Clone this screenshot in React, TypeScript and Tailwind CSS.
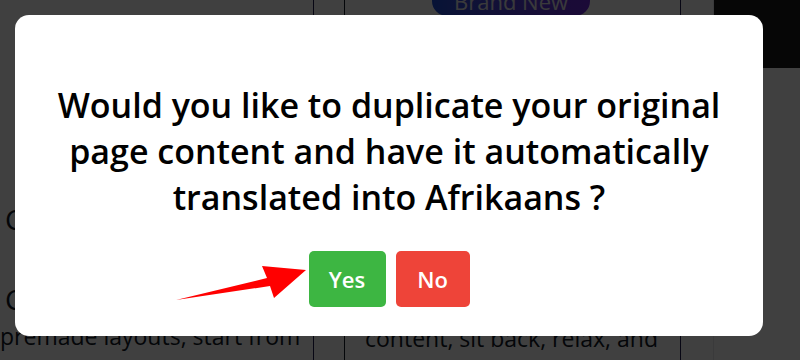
export default function App() {
  return (
    <div className="relative w-[800px] h-[360px] overflow-hidden bg-white font-['Open_Sans',sans-serif]">
      {/* page behind the dialog */}
      <div className="flex h-full">
        <div className="w-[314px] shrink-0 border-r border-[#1e1b4b] pt-[205px] pl-[5px] text-[#111827]">
          <div className="text-[28px] leading-none">C</div>
          <div className="mt-[52px] text-[28px] leading-none">C</div>
          <div className="mt-[12px] -ml-[5px] text-[23px] leading-none whitespace-nowrap">premade layouts, start from</div>
        </div>
        <div className="w-[31px] shrink-0 border-r border-[#111827]" />
        <div className="relative w-[336px] shrink-0 border-r border-[#1e1b4b] pl-[20px] pt-[327px] text-[23px] leading-none whitespace-nowrap text-[#111827]">
          content, sit back, relax, and
          <div className="absolute left-[87px] -top-[14px] w-[158px] h-[30px] rounded-full bg-gradient-to-r from-[#1d4ed8] to-[#6d28d9] flex items-end justify-center pb-[4px] text-[22px] text-[#e5e7eb]">
            Brand New
          </div>
        </div>
        <div className="w-[33px] shrink-0 border-r border-[#e5e7eb]" />
        <div className="flex-1">
          <div className="h-[68px] bg-[#1a1a1a]" />
        </div>
      </div>

      {/* overlay */}
      <div className="absolute inset-0 bg-black/75" />

      {/* dialog */}
      <div className="absolute left-[15px] top-[15px] w-[748px] h-[321px] rounded-[14px] bg-white flex flex-col items-center pt-[67px]">
        <p className="text-center text-[34px] leading-[46px] font-semibold text-black">
          Would you like to duplicate your original
          <br />
          page content and have it automatically
          <br />
          translated into Afrikaans ?
        </p>
        <div className="relative mt-[31px] flex gap-[10px]">
          <button className="w-[77px] h-[56px] rounded-[5px] bg-[#3db642] text-white text-[22px] font-semibold">Yes</button>
          <button className="w-[74px] h-[56px] rounded-[5px] bg-[#ee4439] text-white text-[22px] font-semibold">No</button>
          <svg className="absolute -left-[135px] top-[13px]" width="134" height="40" viewBox="0 0 134 40">
            <path d="M2 36 L96 22 L100 34 L132 6 L88 2 L93 14 Z" fill="#ff0000" />
          </svg>
        </div>
      </div>
    </div>
  )
}
